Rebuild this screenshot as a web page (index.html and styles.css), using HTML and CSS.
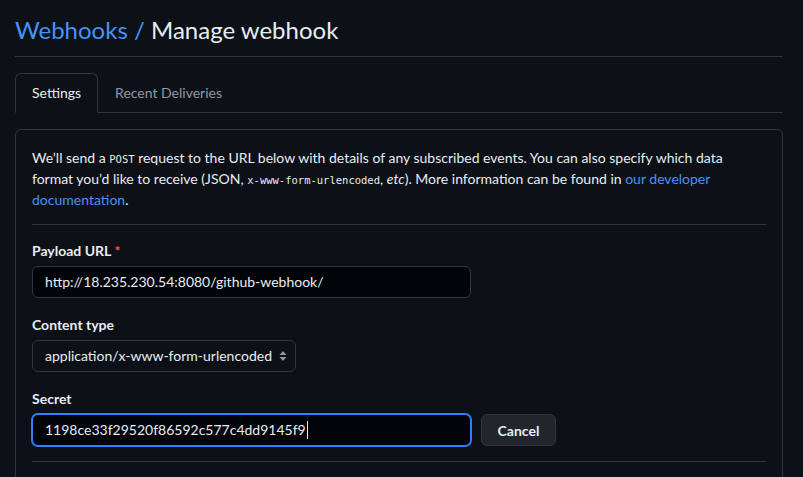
FILE: index.html
```html
<!DOCTYPE html>
<html lang="en">
<head>
<meta charset="utf-8">
<title>Manage webhook</title>
<link rel="stylesheet" href="styles.css">
</head>
<body>
<div class="page">
  <h1 class="title"><a href="#" class="crumb">Webhooks</a> <span class="sep">/</span> Manage webhook</h1>
  <nav class="tabs">
    <a href="#" class="tab tab-active">Settings</a>
    <a href="#" class="tab">Recent Deliveries</a>
  </nav>
  <div class="box">
    <p class="intro">We’ll send a <code>POST</code> request to the URL below with details of any subscribed events. You can also specify which data format you’d like to receive (JSON, <code>x-www-form-urlencoded</code>, <em>etc</em>). More information can be found in <a href="#" class="link">our developer documentation</a>.</p>
    <hr class="rule">
    <div class="group">
      <label class="label">Payload URL <span class="req">*</span></label>
      <div class="field field-url">http://18.235.230.54:8080/github-webhook/</div>
    </div>
    <div class="group">
      <label class="label">Content type</label>
      <div class="field field-select">application/x-www-form-urlencoded
        <svg class="updown" width="8" height="12" viewBox="0 0 8 12"><path d="M4 1 L7.5 5 H0.5 Z M4 11 L0.5 7 H7.5 Z" fill="#8d96a0"/></svg>
      </div>
    </div>
    <div class="group">
      <label class="label">Secret</label>
      <div class="row">
        <div class="field field-secret">1198ce33f29520f86592c577c4dd9145f9<span class="caret"></span></div>
        <button class="btn">Cancel</button>
      </div>
    </div>
    <hr class="rule rule-last">
  </div>
</div>
</body>
</html>
```
FILE: styles.css
```css
* { box-sizing: border-box; }
html, body { margin: 0; padding: 0; background: #0d1117; }
body {
  font-family: "Segoe UI", Lato, "Noto Sans", sans-serif;
  color: #e6edf3;
  font-size: 14px;
  line-height: 21px;
  overflow: hidden;
  height: 477px;
}
.page { width: 768px; margin-left: 15px; padding-top: 12px; }
.title {
  margin: 0;
  font-size: 24px;
  font-weight: 400;
  line-height: 36px;
  padding-bottom: 8px;
  border-bottom: 1px solid #30363d;
  color: #e6edf3;
}
.crumb, .sep { color: #4493f8; text-decoration: none; }
.tabs {
  display: flex;
  margin-top: 16px;
  border-bottom: 1px solid #30363d;
  height: 40px;
}
.tab {
  display: block;
  padding: 8px 16px;
  height: 40px;
  margin-bottom: -1px;
  color: #9198a1;
  text-decoration: none;
  border: 1px solid transparent;
  border-radius: 6px 6px 0 0;
  line-height: 22px;
}
.tab-active {
  color: #e6edf3;
  border-color: #30363d;
  border-bottom-color: #0d1117;
  background: #0d1117;
}
.box {
  margin-top: 16px;
  border: 1px solid #30363d;
  border-radius: 6px;
  padding: 17px 16px 40px;
}
.intro { margin: 0; }
code {
  font-family: "DejaVu Sans Mono", "Liberation Mono", monospace;
  font-size: 10.5px;
  line-height: 1;
}
.link { color: #4493f8; text-decoration: none; }
.rule { border: 0; border-top: 1px solid #30363d; margin: 14px 0 15px; height: 0; }
.rule-last { margin: 15px 0 0; }
.group { margin-bottom: 16px; }
.group:last-of-type { margin-bottom: 0; }
.label { display: block; font-weight: 700; margin-bottom: 5px; }
.req { color: #f85149; }
.field {
  height: 32px;
  border: 1px solid #30363d;
  border-radius: 6px;
  padding: 0 12px;
  line-height: 30px;
  background: #010409;
  color: #e6edf3;
  white-space: nowrap;
}
.field-url { width: 439px; }
.field-select {
  width: 264px;
  background: #0d1117;
  display: flex;
  align-items: center;
  justify-content: space-between;
  padding-right: 8px;
}
.updown { flex: none; }
.row { display: flex; align-items: center; gap: 10px; }
.field-secret {
  width: 439px;
  border-color: #2f81f7;
  box-shadow: 0 0 0 1px #2f81f7;
  display: flex;
  align-items: center;
}
.caret { display: inline-block; width: 1px; height: 18px; background: #e6edf3; margin-left: 1px; }
.btn {
  height: 32px;
  width: 75px;
  border: 1px solid #30363d;
  border-radius: 6px;
  background: #21262d;
  color: #e6edf3;
  font-family: inherit;
  font-size: 14px;
  font-weight: 700;
  padding: 0;
}
```
